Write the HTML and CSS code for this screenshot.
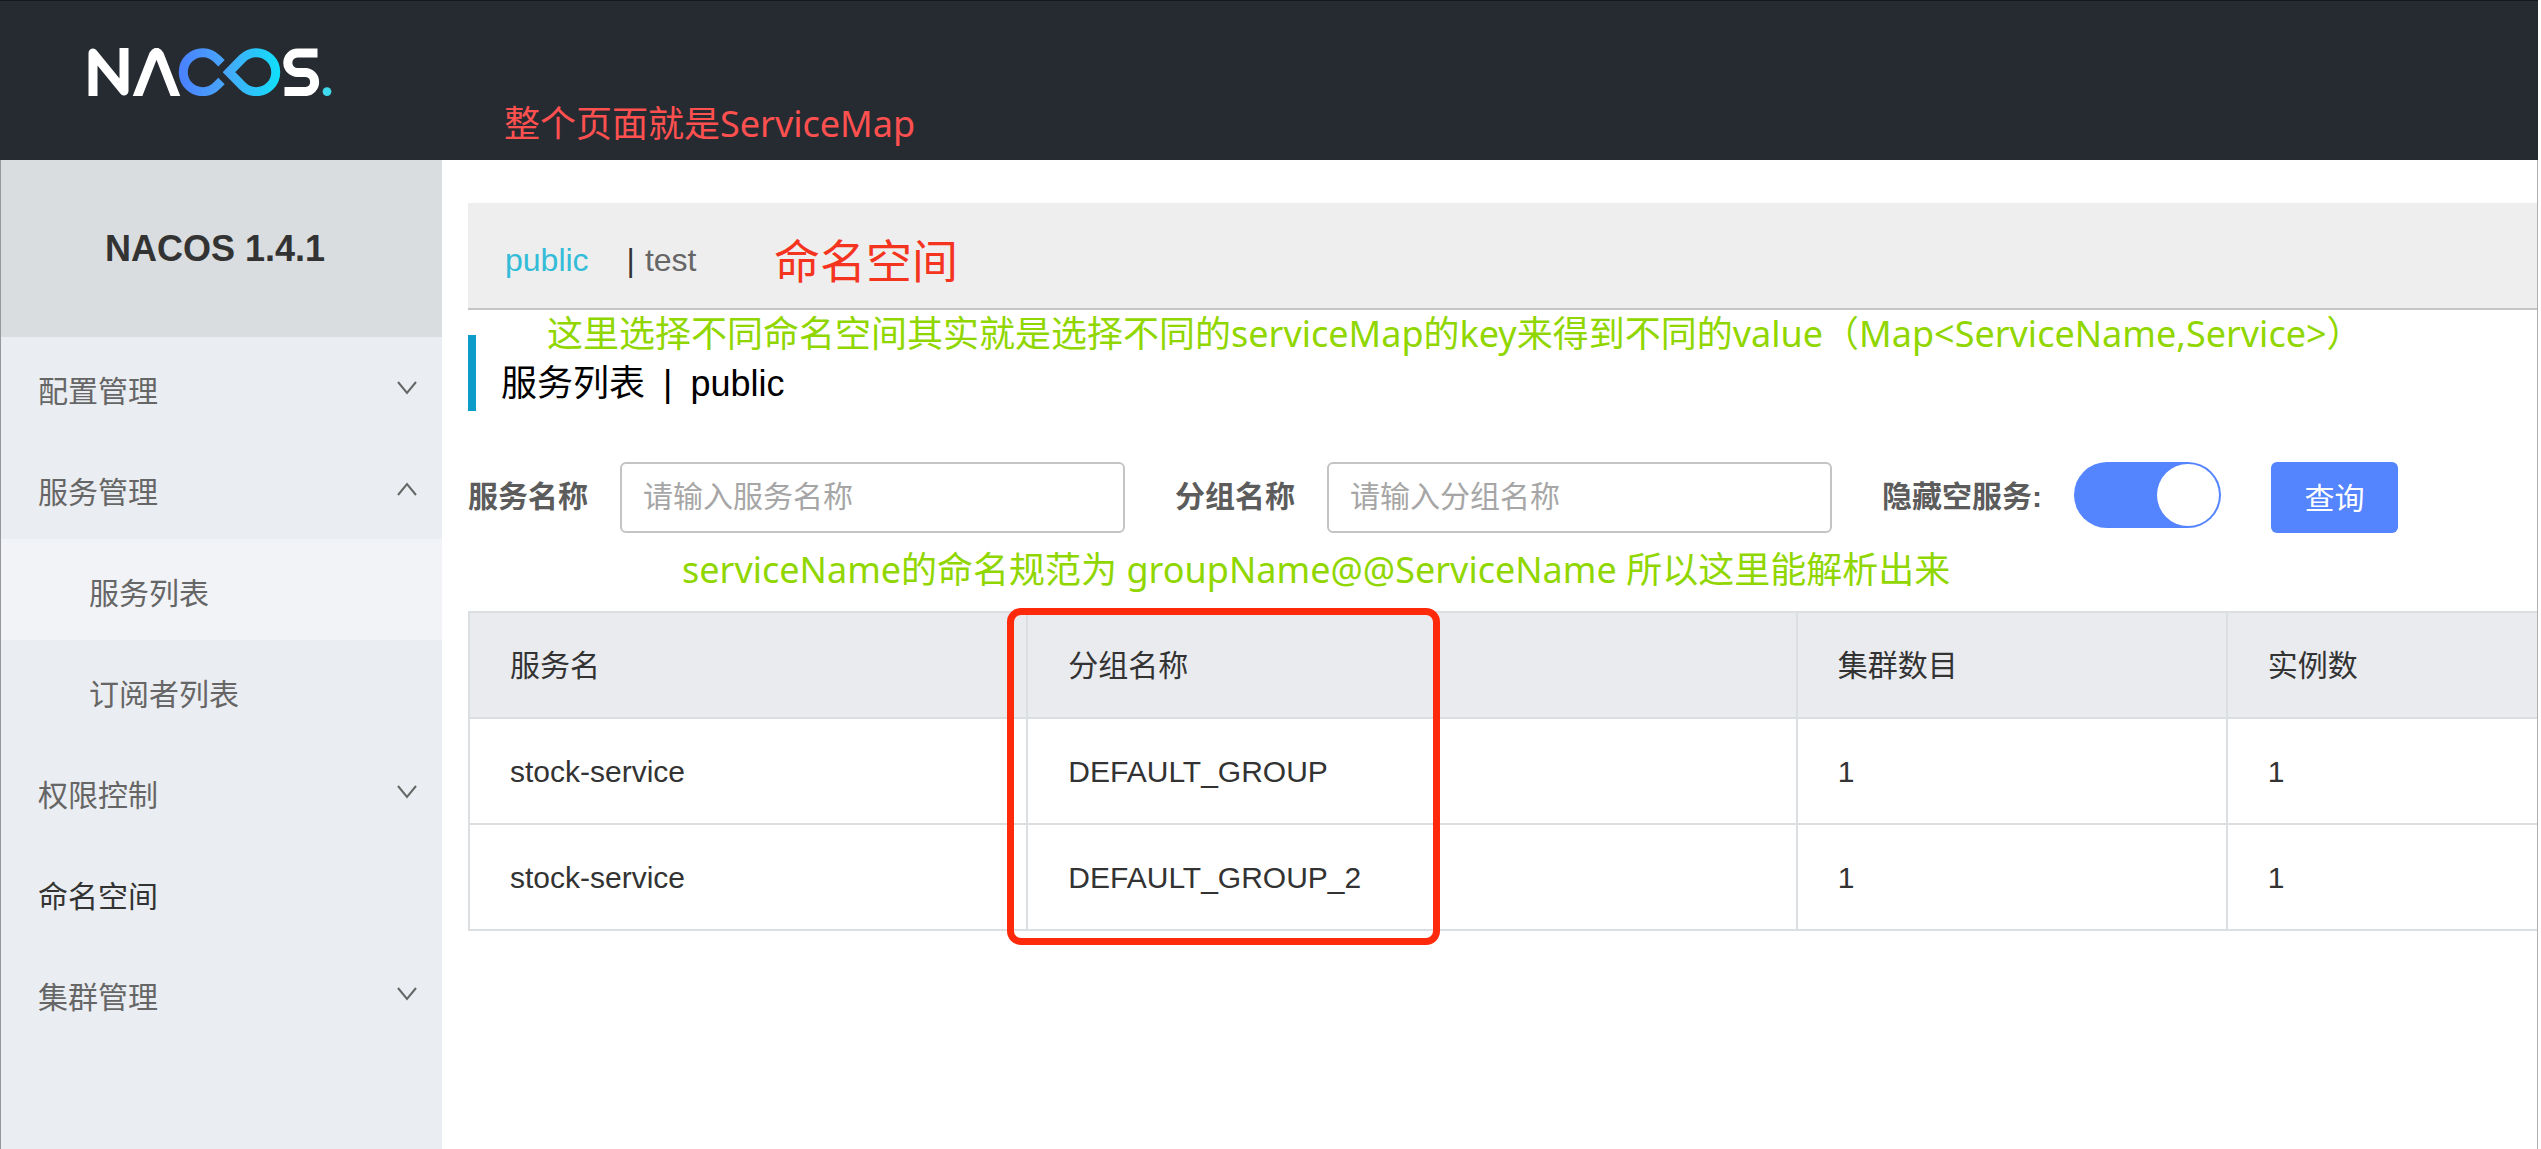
FILE: index.html
```html
<!DOCTYPE html>
<html lang="zh-CN">
<head>
<meta charset="UTF-8">
<title>Nacos</title>
<link rel="stylesheet" href="styles.css">
</head>
<body>
<div class="page">
<header class="header">
<a class="logo" href="#" aria-label="Nacos">
<svg width="244" height="48" viewBox="0 0 244 48" fill="none" stroke-width="9">
<defs>
<linearGradient id="loop" gradientUnits="userSpaceOnUse" x1="91" y1="0" x2="192" y2="0">
<stop offset="0" stop-color="#4a80ff"/>
<stop offset="0.45" stop-color="#48a6fb"/>
<stop offset="1" stop-color="#10e0fa"/>
</linearGradient>
</defs>
<g stroke="#fff">
<path d="M5 48V5L36 43V0" stroke-linejoin="round"/>
<path d="M48 52L65.500 7Q68.500 1.500 71.500 7L89 52"/>
<path d="M229.500 5H209.500A9.700 9.700 0 0 0 209.500 24.400H218A9.600 9.600 0 0 1 218 43.500H196.500"/>
</g>
<g stroke="url(#loop)">
<path d="M133.500 15.300L128.800 10.600A19.500 19.500 0 1 0 128.800 37.700L133.500 33"/>
<path d="M141 24.200L154.200 10.600A19.500 19.500 0 1 1 154.200 37.700Z"/>
</g>
<circle cx="239" cy="43.600" r="4.400" fill="#3fd9ee"/>
</svg>
</a>
</header>

<div class="body">
<aside class="sidebar">
<h1 class="version">NACOS 1.4.1</h1>
<nav>
<ul class="menu">
<li>
<a href="#"><span>配置管理</span><svg class="arrow" viewBox="0 0 20 14"><path d="M1 1L10 12L19 1"/></svg></a>
</li>
<li>
<a href="#"><span>服务管理</span><svg class="arrow" viewBox="0 0 20 14"><path d="M1 13L10 2L19 13"/></svg></a>
<ul class="submenu">
<li><a class="active" href="#"><span>服务列表</span></a></li>
<li><a href="#"><span>订阅者列表</span></a></li>
</ul>
</li>
<li>
<a href="#"><span>权限控制</span><svg class="arrow" viewBox="0 0 20 14"><path d="M1 1L10 12L19 1"/></svg></a>
</li>
<li>
<a class="single" href="#"><span>命名空间</span></a>
</li>
<li>
<a href="#"><span>集群管理</span><svg class="arrow" viewBox="0 0 20 14"><path d="M1 1L10 12L19 1"/></svg></a>
</li>
</ul>
</nav>
</aside>

<main class="content">
<div class="namespaces">
<a class="current" href="#">public</a>
<span class="divider">|</span>
<a href="#">test</a>
</div>

<h2 class="title">服务列表<span class="separator">|</span>public</h2>

<form class="search">
<div class="field">
<label for="service">服务名称</label>
<input id="service" type="text" placeholder="请输入服务名称">
</div>
<div class="field">
<label for="group">分组名称</label>
<input id="group" type="text" placeholder="请输入分组名称">
</div>
<div class="field">
<label for="hide-empty">隐藏空服务:</label>
<input id="hide-empty" class="switch" type="checkbox" checked>
</div>
<button type="button">查询</button>
</form>

<table class="services">
<thead>
<tr>
<th class="col-name">服务名</th>
<th class="col-group">分组名称</th>
<th class="col-cluster">集群数目</th>
<th>实例数</th>
</tr>
</thead>
<tbody>
<tr>
<td>stock-service</td>
<td>DEFAULT_GROUP</td>
<td>1</td>
<td>1</td>
</tr>
<tr>
<td>stock-service</td>
<td>DEFAULT_GROUP_2</td>
<td>1</td>
<td>1</td>
</tr>
</tbody>
</table>
</main>
</div>

<p class="note note-page">整个页面就是ServiceMap</p>
<p class="note note-namespace">命名空间</p>
<p class="note note-key">这里选择不同命名空间其实就是选择不同的serviceMap的key来得到不同的value（Map&lt;ServiceName,Service&gt;）</p>
<p class="note note-name">serviceName的命名规范为 groupName@@ServiceName 所以这里能解析出来</p>
<div class="highlight"></div>
</div>
</body>
</html>
```
FILE: styles.css
```css
:root {
    --header-bg: #262b32;
    --sidebar-bg: #eaedf1;
    --blue: #5584ff;
    --line: #dcdfe2;
    --text: #333;
    --text-light: #666;
    --note-red: #ff5050;
    --note-green: #90d600;
}

* {
    box-sizing: border-box;
    margin: 0;
    padding: 0;
}

body {
    background: #fff;
    color: var(--text);
    font-family: "Liberation Sans", "Noto Sans CJK SC", sans-serif;
    font-size: 30px;
}

a {
    color: inherit;
    text-decoration: none;
}

ul {
    list-style: none;
}

.page {
    position: relative;
    display: flex;
    flex-direction: column;
    min-height: 100vh;
    margin-right: 3px;
    border-left: 1px solid #97989d;
    border-right: 1px solid #b0b0b0;
}

/* Header */

.header {
    height: 160px;
    margin: 0 -1px;
    padding: 47px 88px;
    background: var(--header-bg);
    border-top: 1px solid #15171b;
}

.logo svg {
    display: block;
}

.body {
    display: flex;
    flex: 1;
}

/* Sidebar */

.sidebar {
    flex: 0 0 441px;
    background: var(--sidebar-bg);
}

.version {
    padding-left: 104px;
    background: #d9dde0;
    font-size: 36px;
    line-height: 177px;
}

.menu a {
    display: flex;
    align-items: center;
    justify-content: space-between;
    height: 101px;
    padding: 0 25px 0 37px;
    color: var(--text-light);
}

.menu span {
    padding-top: 2px;
}

.menu .submenu a {
    padding-left: 88px;
}

.menu .active {
    background: #f1f3f7;
}

.menu .single {
    color: var(--text);
}

.arrow {
    width: 20px;
    height: 14px;
    fill: none;
    stroke: #666;
    stroke-width: 2;
}

/* Content */

.content {
    flex: 1;
    min-width: 0;
    padding: 43px 0 0 26px;
}

.namespaces {
    display: flex;
    padding: 39px 37px 30px;
    background: #eee;
    border-bottom: 2px solid #c6c6c6;
    color: var(--text-light);
    font-size: 32px;
    line-height: 36px;
}

.namespaces .current {
    color: #33bcd8;
}

.divider {
    margin: 0 10px 0 38px;
    color: var(--text);
}

.title {
    height: 76px;
    margin-top: 25px;
    padding: 20px 0 0 25px;
    border-left: 8px solid #0c9cc9;
    color: #000;
    font-size: 36px;
    font-weight: normal;
    line-height: 58px;
}

.separator {
    margin: 0 18px;
}

/* Search form */

.search {
    display: flex;
    gap: 50px;
    margin-top: 51px;
}

.field {
    display: flex;
    gap: 32px;
}

.field label {
    color: #5c5c5c;
    font-weight: bold;
    line-height: 70px;
    white-space: nowrap;
}

.field input[type="text"] {
    width: 505px;
    height: 71px;
    padding: 0 21px 2px;
    border: 2px solid #c4c4c4;
    border-radius: 6px;
    font: inherit;
}

.field input::placeholder {
    color: #a6a6a6;
}

.switch {
    appearance: none;
    width: 147px;
    height: 66px;
    border-radius: 33px;
    background: var(--blue);
}

.switch::before {
    content: '';
    display: block;
    width: 62px;
    height: 62px;
    margin: 2px 2px 2px auto;
    border-radius: 50%;
    background: #fff;
}

.search button {
    width: 127px;
    height: 71px;
    padding-bottom: 4px;
    border: 0;
    border-radius: 6px;
    background: var(--blue);
    color: #fff;
    font: inherit;
}

/* Table */

.services {
    width: 100%;
    margin-top: 78px;
    border-collapse: collapse;
    table-layout: fixed;
}

.services th, .services td {
    height: 106px;
    padding: 2px 40px 0;
    border: 2px solid var(--line);
    border-right: 0;
    font-weight: normal;
    text-align: left;
}

.services th {
    padding: 0 40px 4px;
    background: #e9ebef;
}

.col-name {
    width: 27%;
}

.col-group {
    width: 37.2%;
}

.col-cluster {
    width: 20.8%;
}

/* Notes drawn over the page */

.note {
    position: absolute;
    color: var(--note-green);
    font-family: "Noto Sans", "Noto Sans CJK SC", sans-serif;
    font-size: 36px;
    line-height: 48px;
    white-space: nowrap;
}

.note-page {
    top: 100px;
    left: 503px;
    color: var(--note-red);
}

.note-namespace {
    top: 236px;
    left: 773px;
    color: #f5341f;
    font-size: 46px;
}

.note-key {
    top: 310px;
    left: 546px;
}

.note-name {
    top: 546px;
    left: 681px;
}

.highlight {
    position: absolute;
    top: 608px;
    left: 1006px;
    width: 433px;
    height: 337px;
    border: 7px solid #ff2a0c;
    border-radius: 14px;
}
```
